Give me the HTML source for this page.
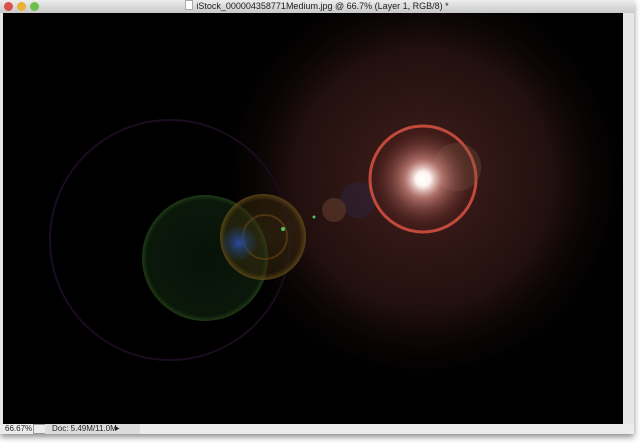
<!DOCTYPE html>
<html><head><style>
body{margin:0;width:640px;height:444px;background:#fff;position:relative;overflow:hidden;font-family:"Liberation Sans",sans-serif}
#win{position:absolute;left:0;top:0;width:634px;height:434px;background:#e6e6e6;box-shadow:0 3px 6px rgba(0,0,0,.45)}
#title{position:absolute;left:0;top:0;width:634px;height:13px;background:linear-gradient(#ededed,#c9c9c9);font-size:9px;color:#222;text-align:center;line-height:13px}
.b{position:absolute;top:2px;width:9px;height:9px;border-radius:50%}
#cv{position:absolute;left:3px;top:13px;width:620px;height:411px;background:#000;overflow:hidden}
#status{position:absolute;left:0;top:424px;width:634px;height:10px;font-size:8px;color:#222;line-height:10px;background:#ececec}
</style></head><body>
<div id="win">
<div id="title">
<span class="b" style="left:4px;background:#d9514a"></span>
<span class="b" style="left:17px;background:#e8b236"></span>
<span class="b" style="left:30px;background:#6cbf4a"></span>
<span style="display:inline-block;width:6px;height:8px;background:#fff;border:1px solid #aaa;vertical-align:-1px;margin-right:3px"></span>iStock_000004358771Medium.jpg @ 66.7% (Layer 1, RGB/8) *</div>
<div id="cv">
<svg width="620" height="411" viewBox="3 13 620 411">
<defs>
<radialGradient id="glow"><stop offset="0" stop-color="#4a2220" stop-opacity=".9"/><stop offset=".6" stop-color="#2a1412" stop-opacity=".8"/><stop offset="1" stop-color="#000" stop-opacity="0"/></radialGradient>
<radialGradient id="core"><stop offset="0" stop-color="#fff"/><stop offset=".15" stop-color="#fff5f0"/><stop offset=".4" stop-color="#d89088" stop-opacity=".7"/><stop offset="1" stop-color="#7a3530" stop-opacity="0"/></radialGradient>
<radialGradient id="grn"><stop offset="0" stop-color="#081208"/><stop offset=".92" stop-color="#0a180a"/><stop offset="1" stop-color="#1e3a14"/></radialGradient>
<radialGradient id="yel"><stop offset="0" stop-color="#4a3a14" stop-opacity=".45"/><stop offset=".85" stop-color="#3a2a0c" stop-opacity=".45"/><stop offset="1" stop-color="#6a5018" stop-opacity=".8"/></radialGradient>
<radialGradient id="blu"><stop offset="0" stop-color="#2a4aa0"/><stop offset="1" stop-color="#203a50" stop-opacity=".2"/></radialGradient>
</defs>
<circle cx="423" cy="179" r="215" fill="url(#glow)"/>
<circle cx="170" cy="240" r="120" fill="none" stroke="#1a0c1e" stroke-width="2"/>
<circle cx="205" cy="258" r="63" fill="url(#grn)"/>
<circle cx="263" cy="237" r="43" fill="url(#yel)"/>
<circle cx="265" cy="237" r="22" fill="none" stroke="#6a4418" stroke-width="2" opacity=".6"/>
<circle cx="239" cy="243" r="17" fill="url(#blu)"/>
<circle cx="358" cy="200" r="18" fill="#2a2a50" opacity=".35"/>
<circle cx="334" cy="210" r="12" fill="#5a3628" opacity=".7"/>
<circle cx="283" cy="229" r="2" fill="#4fc060"/>
<circle cx="314" cy="217" r="1.5" fill="#4fc060"/>
<circle cx="423" cy="179" r="53" fill="#4a201c" opacity=".5"/>
<circle cx="423" cy="179" r="53" fill="none" stroke="#c24a3c" stroke-width="3"/>
<circle cx="457" cy="167" r="24" fill="#7a5a44" opacity=".3" stroke="#8a6a50" stroke-opacity=".35"/>
<circle cx="423" cy="179" r="48" fill="url(#core)"/>
</svg>
</div>
<div id="status"><span style="position:absolute;left:5px">66.67%</span><span style="position:absolute;left:33px;width:12px;border:1px solid #999;height:8px;top:0"></span><span style="position:absolute;left:45px;width:95px;height:10px;background:#dcdcdc"></span><span style="position:absolute;left:52px">Doc: 5.49M/11.0M</span><span style="position:absolute;left:115px;font-size:6px">▶</span></div>
</div>
</body></html>
